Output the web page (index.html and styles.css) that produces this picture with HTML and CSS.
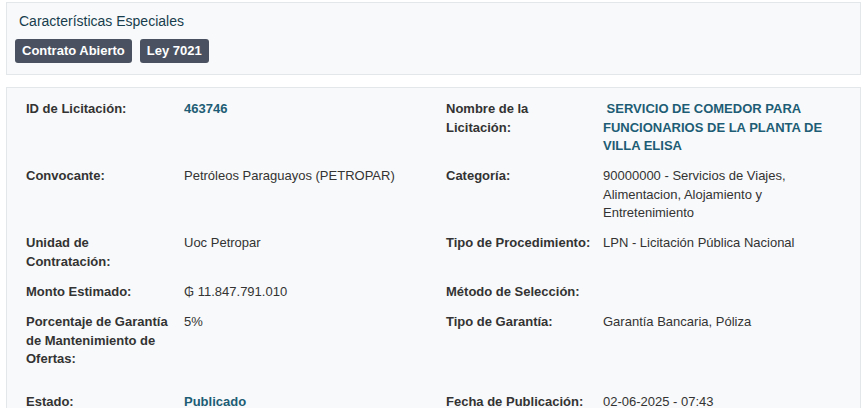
FILE: index.html
```html
<!DOCTYPE html>
<html lang="es">
<head>
    <meta charset="UTF-8">
    <meta name="viewport" content="width=device-width, initial-scale=1.0">
    <title>Detalle de Licitación</title>
    <link rel="stylesheet" href="styles.css">
</head>
<body>
    <div class="panel panel-features">
        <h4 class="panel-title">Características Especiales</h4>
        <div class="badges">
            <span class="badge">Contrato Abierto</span>
            <span class="badge">Ley 7021</span>
        </div>
    </div>

    <div class="panel panel-details">
        <div class="details">
            <div class="label">ID de Licitación:</div>
            <div class="value link">463746</div>
            <div class="label">Nombre de la Licitación:</div>
            <div class="value link">&nbsp;SERVICIO DE COMEDOR PARA FUNCIONARIOS DE LA PLANTA DE VILLA ELISA</div>

            <div class="label">Convocante:</div>
            <div class="value">Petróleos Paraguayos (PETROPAR)</div>
            <div class="label">Categoría:</div>
            <div class="value">90000000 - Servicios de Viajes, Alimentacion, Alojamiento y Entretenimiento</div>

            <div class="label">Unidad de Contratación:</div>
            <div class="value">Uoc Petropar</div>
            <div class="label">Tipo de Procedimiento:</div>
            <div class="value">LPN - Licitación Pública Nacional</div>

            <div class="label">Monto Estimado:</div>
            <div class="value">₲ 11.847.791.010</div>
            <div class="label">Método de Selección:</div>
            <div class="value"></div>

            <div class="label">Porcentaje de Garantía de Mantenimiento de Ofertas:</div>
            <div class="value">5%</div>
            <div class="label">Tipo de Garantía:</div>
            <div class="value">Garantía Bancaria, Póliza</div>

            <!-- fila separada del resto -->
            <div class="label spaced">Estado:</div>
            <div class="value link spaced">Publicado</div>
            <div class="label spaced">Fecha de Publicación:</div>
            <div class="value spaced">02-06-2025 - 07:43</div>
        </div>
    </div>
</body>
</html>
```

FILE: styles.css
```css
* {
    margin: 0;
    padding: 0;
    box-sizing: border-box;
}

body {
    font-family: 'Liberation Sans', Arial, sans-serif;
    font-size: 13px;
    line-height: 1.42857143;
    color: #333;
    background-color: #fff;
    padding: 2px 2px 0 6px;
}

.panel {
    background-color: #f8f9fa;
    border: 1px solid #e4e7ea;
}

.panel-features {
    padding: 9px 8px 11px 8px;
    margin-bottom: 12px;
}

.panel-title {
    font-size: 14px;
    line-height: 19px;
    font-weight: normal;
    color: #173d4d;
    padding-left: 4px;
    margin-bottom: 8px;
}

.badges {
    display: flex;
    gap: 8px;
}

.badge {
    display: inline-block;
    background-color: #4a5261;
    color: #fff;
    font-weight: bold;
    line-height: 18px;
    padding: 3px 7px;
    border-radius: 3px;
}

.panel-details {
    padding: 12px 19px 0 19px;
}

.details {
    display: grid;
    grid-template-columns: 158px 262px 157px 1fr;
}

.label {
    font-weight: bold;
    padding-bottom: 11.5px;
    padding-right: 8px;
}

.value {
    padding-bottom: 11.5px;
    padding-right: 14px;
}

.link {
    color: #1d5d75;
    font-weight: bold;
}

.spaced {
    margin-top: 13px;
}
```
